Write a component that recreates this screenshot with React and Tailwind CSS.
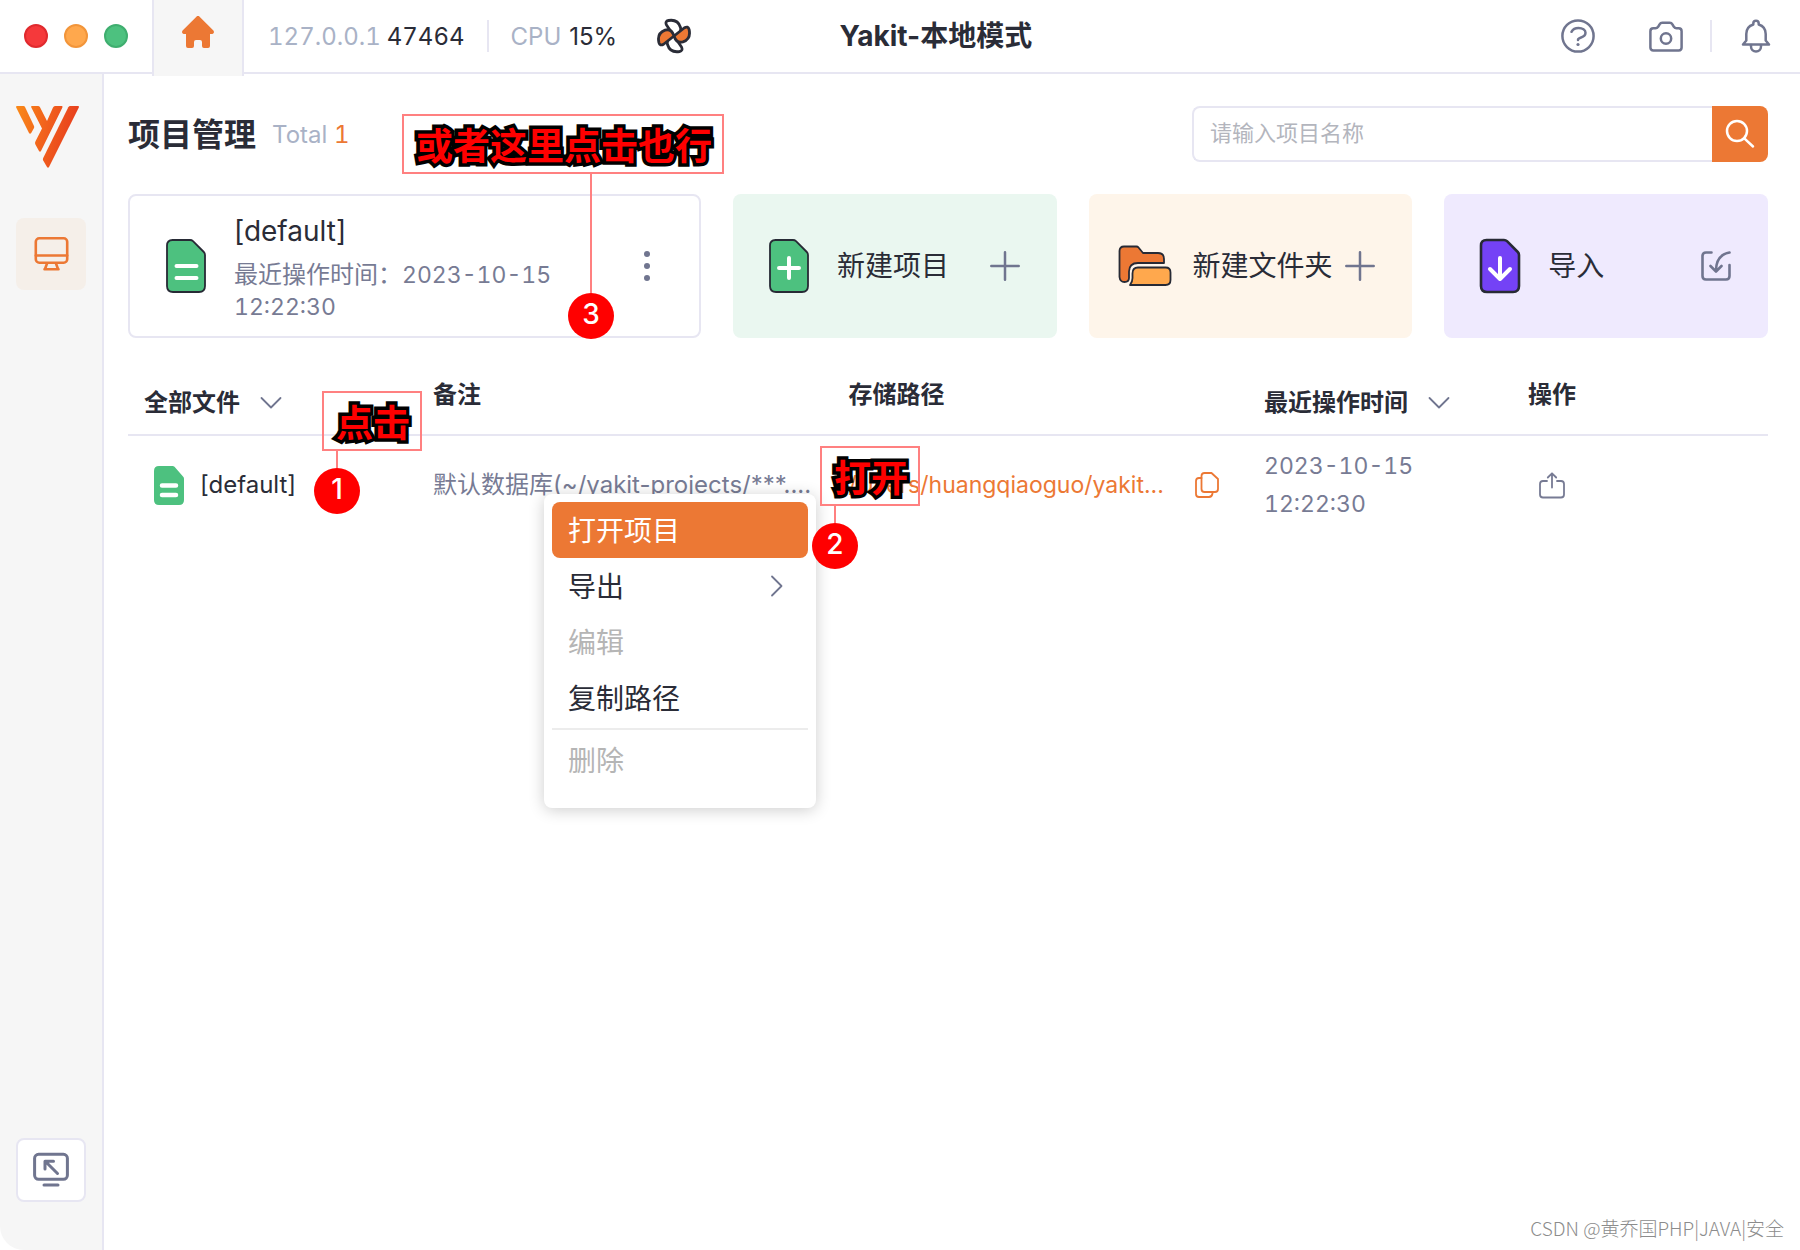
const icon = {
  fill: 'none',
  stroke: 'currentColor',
  strokeLinecap: 'round',
  strokeLinejoin: 'round',
  'aria-hidden': true,
}

function HomeIcon() {
  return (
    <svg width="32" height="32" viewBox="0 0 32 32" fill="currentColor" aria-hidden="true">
      <path d="M14.4.7a2.2 2.2 0 0 1 3.2 0L31.4 14.6c1.1 1.2.5 3.4-1.2 3.4H28v12a2 2 0 0 1-2 2h-4a2 2 0 0 1-2-2v-4a2 2 0 0 0-2-2h-4a2 2 0 0 0-2 2v4a2 2 0 0 1-2 2H6a2 2 0 0 1-2-2V18H1.8C.1 18-.5 15.8.6 14.6z" />
    </svg>
  )
}

function FanIcon() {
  const blade = 'M18 18 10.5 7Q8.800 3.200 12.500 2.500 22 1 24.500 9.500 26 16 18 18z'
  return (
    <svg width="36" height="36" viewBox="0 0 36 36" {...icon} strokeWidth="2.8">
      <path d={blade} fill="#fff" />
      <path d={blade} fill="#fff" transform="rotate(180 18 18)" />
      <path d={blade} fill="#ec7834" transform="rotate(86 18 18)" />
      <path d={blade} fill="#ec7834" transform="rotate(266 18 18)" />
    </svg>
  )
}

function HelpIcon() {
  return (
    <svg width="34" height="34" viewBox="0 0 34 34" {...icon} strokeWidth="2.5">
      <circle cx="17" cy="17" r="15.6" />
      <path d="M10.5 12.8C12 10 14.5 9 17.5 9c4 0 7 2 7 4.800 0 3.200-2.500 4.200-5 5-1.800.6-2.500 1.200-2.500 2.200" />
      <circle cx="17" cy="25.5" r="1.6" fill="currentColor" stroke="none" />
    </svg>
  )
}

function CameraIcon() {
  return (
    <svg width="34" height="34" viewBox="0 0 34 34" {...icon} strokeWidth="2.5">
      <path d="M4.3 9.300H6.500c1.200 0 2-.6 2.600-1.500L10.500 5.500c.7-1.300 1.600-1.700 2.800-1.700h7.400c1.200 0 2.100.4 2.800 1.700l1.400 2.300c.6.9 1.400 1.500 2.600 1.500h2.200c1.800 0 2.900 1.200 2.900 2.900v16.400c0 1.700-1.100 2.900-2.900 2.900H4.300c-1.800 0-2.900-1.200-2.900-2.900V12.200c0-1.700 1.100-2.900 2.900-2.900z" />
      <circle cx="17" cy="19.5" r="5.2" />
    </svg>
  )
}

function BellIcon() {
  return (
    <svg width="34" height="34" viewBox="0 0 34 34" {...icon} strokeWidth="2.5">
      <path d="M14.300 5.500V4.400a2.700 2.700 0 0 1 5.400 0v1.100c4.700 1.500 7 4.800 7 9.500v6.500l3.300 4H4l3.300-4V15c0-4.700 2.300-8 7-9.500z" />
      <path d="M12 26v1.500a5 5 0 0 0 10 0V26" />
    </svg>
  )
}

function LogoIcon() {
  return (
    <svg width="63" height="62" viewBox="0 0 63 62" fill="url(#logo-fill)" role="img" aria-label="Yakit">
      <defs>
        <linearGradient id="logo-fill" x1="0" y1="0" x2="60" y2="12" gradientUnits="userSpaceOnUse">
          <stop offset="0" stopColor="#f98a18" />
          <stop offset="0.5" stopColor="#f2641c" />
          <stop offset="1" stopColor="#e8411e" />
        </linearGradient>
      </defs>
      <path d="M1 0h6.500q1 0 1.500 1l9 19q.4 1 0 2l-2.800 5q-1.200 1.500-2.200 0L.2 1.500Q-.3 0 1 0z" />
      <path d="M16 0h6q1.300 0 2 1.200L31 15l6-13.500Q37.700 0 39 0h6.500q1.500 0 .9 1.400L25 45q-1 1.600-2 0l-3.600-6.500q-.8-1.500 0-3L26 22.500 15.200 1.300Q14.700 0 16 0z" />
      <path d="M54.300 0h7.700q1.400 0 .8 1.400L33 61q-1 1.600-2 0l-3.800-6.500q-.6-1.200 0-2.500L52.300 1.300Q53 0 54.300 0z" />
    </svg>
  )
}

function MonitorIcon() {
  return (
    <svg width="36" height="36" viewBox="0 0 36 36" {...icon} strokeWidth="2.6">
      <rect x="2.8" y="2.3" width="31.4" height="24.4" rx="3.5" />
      <path d="M2.800 19.500h31.400M14 27.500 12 33M23 27.500 25 33M11.500 33.200h14" />
    </svg>
  )
}

function ScreenArrowIcon() {
  return (
    <svg width="38" height="36" viewBox="0 0 38 36" {...icon} strokeWidth="3">
      <rect x="2.600" y="2.300" width="32.800" height="25" rx="4" />
      <path d="M13 17V9.300H21.500M14 10 25.500 21.500M12 33h14" />
    </svg>
  )
}

function FileShape({ fill, outline = 1.8, children }) {
  return (
    <svg width="42" height="56" viewBox="0 0 42 56" {...icon} strokeWidth="4">
      <path
        d="M7.500 2H25q1.800 0 3 1.200L38.800 14Q40 15.200 40 17v31q0 6-6 6H8q-6 0-6-6V7.500Q2 2 7.500 2z"
        fill={fill}
        stroke="#272a35"
        strokeWidth={outline}
      />
      {children}
    </svg>
  )
}

function FileIcon() {
  return (
    <FileShape fill="#4dc17f">
      <path d="M11.500 28h20M11.500 40h20" stroke="#fff" />
    </FileShape>
  )
}

function FilePlusIcon() {
  return (
    <FileShape fill="#4dc17f">
      <path d="M21 20v20M11 30h20" stroke="#fff" />
    </FileShape>
  )
}

function FileImportIcon() {
  return (
    <FileShape fill="#7442f6" outline={2.6}>
      <path d="M21 20v20M11 31l10 10 10-10" stroke="#fff" />
    </FileShape>
  )
}

function SmallFileIcon() {
  return (
    <svg width="30" height="39" viewBox="0 0 30 39" {...icon} strokeWidth="4.5">
      <path d="M5 0h13.500q1.200 0 2 .8L29 10.500q1 1 1 2.200V34q0 5-5 5H5q-5 0-5-5V5q0-5 5-5z" fill="#4dc17f" stroke="none" />
      <path d="M8 19.500h14M8 29h14" stroke="#fff" />
    </svg>
  )
}

function FolderIcon() {
  return (
    <svg width="54" height="42" viewBox="0 0 54 42" {...icon} stroke="#272a35" strokeWidth="1.800">
      <path d="M6 1.500h12.500q1.200 0 2 1L25 8h15q6 0 6 6v4H20q-9 0-9 8.500V33q0 4-4.500 4t-5-5V6Q1.500 1.500 6 1.500z" fill="#ec7834" />
      <path d="M12 40q2.500-3 2.500-7v-4.500Q14.500 22.500 20 22.500h27.500q5 0 5 5V35q0 5-5 5z" fill="#ffa84d" />
    </svg>
  )
}

function PlusIcon() {
  return (
    <svg width="30" height="30" viewBox="0 0 30 30" {...icon} strokeWidth="2.5">
      <path d="M15 1.300v27.400M1.300 15h27.400" />
    </svg>
  )
}

function ImportIcon() {
  return (
    <svg width="32" height="32" viewBox="0 0 32 32" {...icon} strokeWidth="2.6">
      <path d="M11.500 2.500H6Q2.500 2.500 2.500 6v20q0 3.500 3.500 3.500h20q3.500 0 3.500-3.500V15" />
      <path d="M29.500 2.500Q16 5 16 21M10.500 16l5.500 5.500L21.500 16" />
    </svg>
  )
}

function ChevronIcon({ className }) {
  return (
    <svg width="22" height="22" viewBox="0 0 22 22" {...icon} strokeWidth="1.8" className={className}>
      <path d="m1.500 6 9.500 9.500L20.500 6" />
    </svg>
  )
}

function CopyIcon() {
  return (
    <svg width="24" height="26" viewBox="0 0 24 26" {...icon} strokeWidth="1.8">
      <path d="M9.500 1h7l6.500 6v10q0 3-3 3H9.500q-3 0-3-3V4q0-3 3-3z" />
      <path d="M6.500 6H4Q1 6 1 9v13q0 3 3 3h10q3 0 3.500-3.500V20" />
    </svg>
  )
}

function ShareIcon() {
  return (
    <svg width="26" height="27" viewBox="0 0 26 27" {...icon} strokeWidth="1.8">
      <path d="M8 9H4Q1 9 1 12v10.500q0 3 3 3h18q3 0 3-3V12q0-3-3-3h-4" />
      <path d="M13 15.500V1.500M8.800 5.500 13 1.300l4.200 4.200" />
    </svg>
  )
}

function SearchIcon() {
  return (
    <svg width="30" height="30" viewBox="0 0 30 30" {...icon} strokeWidth="2.5">
      <circle cx="12" cy="12" r="10" />
      <path d="m19.300 19.300 8.700 8.200" />
    </svg>
  )
}

function ActionCard({ className, art, label, action }) {
  return (
    <button type="button" className={`flex items-center gap-5 rounded-lg pr-8 pl-7 text-left ${className}`}>
      <span className="flex w-14 shrink-0 justify-center">{art}</span>
      <span className="flex-1 text-[28px] leading-9 whitespace-nowrap">{label}</span>
      <span className="-ml-4 flex w-10 shrink-0 justify-center text-[#70758f]">{action}</span>
    </button>
  )
}

function SortHeader({ children }) {
  return (
    <button type="button" className="flex h-[50px] items-center gap-5 font-bold">
      {children}
      <ChevronIcon className="text-[#70758f]" />
    </button>
  )
}

// Numbered note pinned over the page: label box, leader line, red dot
function Callout({ number, text, className, stemClass }) {
  return (
    <div className={`pointer-events-none absolute ${className}`}>
      <p className="border-2 border-[#ff8080] pr-[10px] pl-3 font-['Noto_Sans_CJK_SC',sans-serif] text-[37px] leading-[56px] font-bold whitespace-nowrap text-[#ff0000] [-webkit-text-stroke:7px_black] [paint-order:stroke_fill]">
        {text}
      </p>
      <div className={`flex w-[46px] flex-col items-center ${stemClass}`}>
        <span className="w-[2px] flex-1 bg-[#ff8080]" />
        <span className="flex h-[46px] w-[46px] items-center justify-center rounded-full bg-[#ff0000] pb-1 text-[28px] leading-8 font-medium text-white">
          {number}
        </span>
      </div>
    </div>
  )
}

function MenuItem({ children, className = '', disabled }) {
  return (
    <button
      type="button"
      role="menuitem"
      disabled={disabled}
      className={`flex h-14 w-full items-center justify-between rounded-lg px-4 font-['Noto_Sans_CJK_SC',sans-serif] text-[28px] disabled:text-[#b5b5b5] ${className}`}
    >
      {children}
    </button>
  )
}

export default function App() {
  return (
    <div className="relative flex min-h-screen flex-col overflow-hidden bg-white font-['Inter','Noto_Sans_CJK_SC',sans-serif] text-2xl text-[#2a2c37]">
      {/* Title bar */}
      <header className="flex h-[74px] shrink-0 items-center border-b-2 border-[#e7e6f2]">
        <div className="flex w-[152px] gap-4 pl-6">
          <span className="h-6 w-6 rounded-full border-2 border-[#e02a2e] bg-[#f5393b]" />
          <span className="h-6 w-6 rounded-full border-2 border-[#f2953a] bg-[#ffa84d]" />
          <span className="h-6 w-6 rounded-full border-2 border-[#3fae6f] bg-[#4dc17f]" />
        </div>
        <button
          type="button"
          aria-label="Home"
          className="flex h-[76px] w-[92px] items-start justify-center self-start border-x-2 border-[#e7e6f2] bg-[#f6f6f6] pt-4 text-[#ec7834]"
        >
          <HomeIcon />
        </button>
        <p className="ml-6 flex gap-[6px] pt-[2px] text-[#a9b2c6] tabular-nums">
          127.0.0.1 <span className="text-[#2a2c37]">47464</span>
        </p>
        <span className="mx-[22px] h-8 w-[2px] bg-[#e7e6f2]" />
        <p className="flex min-w-[109px] gap-2 pt-[2px] text-[#a9b2c6]">
          CPU <span className="text-[#2a2c37]">15%</span>
        </p>
        <span className="ml-9">
          <FanIcon />
        </span>
        <h1 className="ml-[148px] pt-[2px] text-[28px] font-bold">Yakit-本地模式</h1>
        <div className="mr-[27px] ml-auto flex items-center text-[#70758f]">
          <button type="button" aria-label="Help" className="mr-[54px]">
            <HelpIcon />
          </button>
          <button type="button" aria-label="Screenshot">
            <CameraIcon />
          </button>
          <span className="mx-[27px] h-8 w-[2px] bg-[#e7e6f2]" />
          <button type="button" aria-label="Notifications">
            <BellIcon />
          </button>
        </div>
      </header>

      <div className="flex flex-1">
        {/* Sidebar */}
        <nav className="flex w-[104px] shrink-0 flex-col items-start rounded-bl-3xl border-r-2 border-[#e7e6f2] bg-[#f6f6f6] px-4 pt-8 pb-12">
          <LogoIcon />
          <button
            type="button"
            aria-label="Projects"
            className="mt-[50px] flex h-[72px] w-[70px] items-center justify-center rounded-lg bg-[#f5efe9] text-[#ec7834]"
          >
            <MonitorIcon />
          </button>
          <button
            type="button"
            aria-label="Switch view"
            className="mt-auto flex h-16 w-[70px] items-center justify-center rounded-lg border-2 border-[#e7e6f2] bg-white text-[#70758f]"
          >
            <ScreenArrowIcon />
          </button>
        </nav>

        <main className="min-w-0 flex-1 pt-8 pr-8 pl-6">
          <div className="flex h-14 items-center">
            <div className="flex items-center gap-4 pt-[2px]">
              <h2 className="text-[32px] font-bold">项目管理</h2>
              <p className="text-[#a9b2c6]">
                Total <span className="text-[#ec7834] tabular-nums">1</span>
              </p>
            </div>
            <form className="ml-auto flex h-14 w-[576px]">
              <input
                type="text"
                aria-label="请输入项目名称"
                placeholder="请输入项目名称"
                className="min-w-0 flex-1 rounded-l-lg border-2 border-r-0 border-[#e7e6f2] px-4 text-[22px] outline-none placeholder:text-[#b3b5bd]"
              />
              <button
                type="button"
                aria-label="Search"
                className="flex w-14 items-center justify-center rounded-r-lg bg-[#ec7834] text-white"
              >
                <SearchIcon />
              </button>
            </form>
          </div>

          {/* Current project and quick actions */}
          <section className="mt-8 grid h-36 grid-cols-[1.77fr_1fr_1fr_1fr] gap-8">
            <div className="flex items-center rounded-lg border-2 border-[#e7e6f2] pr-8 pl-7">
              <span className="flex w-14 shrink-0 justify-center">
                <FileIcon />
              </span>
              <div className="ml-5 flex-1 pt-1">
                <h3 className="text-[28px] leading-9">[default]</h3>
                <p className="mt-[10px] w-80 leading-8 text-[#777b94]">
                  最近操作时间：
                  <time className="text-[23px] tabular-nums">
                    <span className="whitespace-nowrap">2023-10-15</span> 12:22:30
                  </time>
                </p>
              </div>
              <button type="button" aria-label="More" className="flex w-10 flex-col items-center gap-[6px]">
                <span className="h-[6px] w-[6px] rounded-full bg-[#70758f]" />
                <span className="h-[6px] w-[6px] rounded-full bg-[#70758f]" />
                <span className="h-[6px] w-[6px] rounded-full bg-[#70758f]" />
              </button>
            </div>
            <ActionCard className="bg-[#eaf7f0]" art={<FilePlusIcon />} label="新建项目" action={<PlusIcon />} />
            <ActionCard className="bg-[#fef5ea]" art={<FolderIcon />} label="新建文件夹" action={<PlusIcon />} />
            <ActionCard className="bg-[#efeafe]" art={<FileImportIcon />} label="导入" action={<ImportIcon />} />
          </section>

          <table className="mt-6 w-full table-fixed text-left">
            <colgroup>
              <col className="w-[289px]" />
              <col />
              <col />
              <col className="w-[264px]" />
              <col className="w-[256px]" />
            </colgroup>
            <thead>
              <tr className="border-b-2 border-[#e7e6f2] align-top leading-[34px]">
                <th className="px-4 pt-4 pb-[6px]">
                  <SortHeader>全部文件</SortHeader>
                </th>
                <th className="px-4 pt-4">备注</th>
                <th className="px-4 pt-4">存储路径</th>
                <th className="px-4 pt-4">
                  <SortHeader>最近操作时间</SortHeader>
                </th>
                <th className="px-4 pt-4">操作</th>
              </tr>
            </thead>
            <tbody>
              <tr className="text-[#777b94]">
                <td className="px-4">
                  <div className="flex items-center gap-4 pl-[10px] text-[#2a2c37]">
                    <SmallFileIcon />
                    [default]
                  </div>
                </td>
                <td className="px-4 whitespace-nowrap">默认数据库(~/yakit-projects/***....</td>
                <td className="px-4">
                  <div className="flex items-center justify-between pr-[13px] text-[#ec7834]">
                    <a href="#path" className="text-[23px]">
                      /Users/huangqiaoguo/yakit...
                    </a>
                    <button type="button" aria-label="Copy path">
                      <CopyIcon />
                    </button>
                  </div>
                </td>
                <td className="py-[11px] pr-20 pl-4 text-[23px] leading-[38px] tabular-nums">2023-10-15 12:22:30</td>
                <td className="px-4">
                  <button type="button" aria-label="Export" className="flex w-12 justify-center">
                    <ShareIcon />
                  </button>
                </td>
              </tr>
            </tbody>
          </table>
        </main>
      </div>

      {/* Context menu */}
      <div
        role="menu"
        className="absolute top-[494px] left-[544px] w-[272px] rounded-lg bg-white px-2 pt-2 pb-5 shadow-[0_2px_16px_rgba(0,0,0,0.2)]"
      >
        <MenuItem className="bg-[#ec7834] text-white">打开项目</MenuItem>
        <MenuItem>
          导出
          <ChevronIcon className="mr-1 -rotate-90 text-[#70758f]" />
        </MenuItem>
        <MenuItem disabled>编辑</MenuItem>
        <MenuItem>复制路径</MenuItem>
        <hr className="my-[2px] border-t-2 border-[#ececec]" />
        <MenuItem disabled>删除</MenuItem>
      </div>

      <Callout number={3} text="或者这里点击也行" className="top-[114px] left-[402px]" stemClass="ml-[166px] h-[165px]" />
      <Callout number={1} text="点击" className="top-[391px] left-[322px]" stemClass="-ml-[8px] h-[63px]" />
      <Callout number={2} text="打开" className="top-[446px] left-[820px]" stemClass="-ml-[8px] h-[63px]" />

      <p className="absolute right-4 bottom-[10px] font-['Noto_Sans_CJK_SC',sans-serif] text-[19px] leading-6 font-light text-[#8c8c8c]">
        CSDN @黄乔国PHP|JAVA|安全
      </p>
    </div>
  )
}
